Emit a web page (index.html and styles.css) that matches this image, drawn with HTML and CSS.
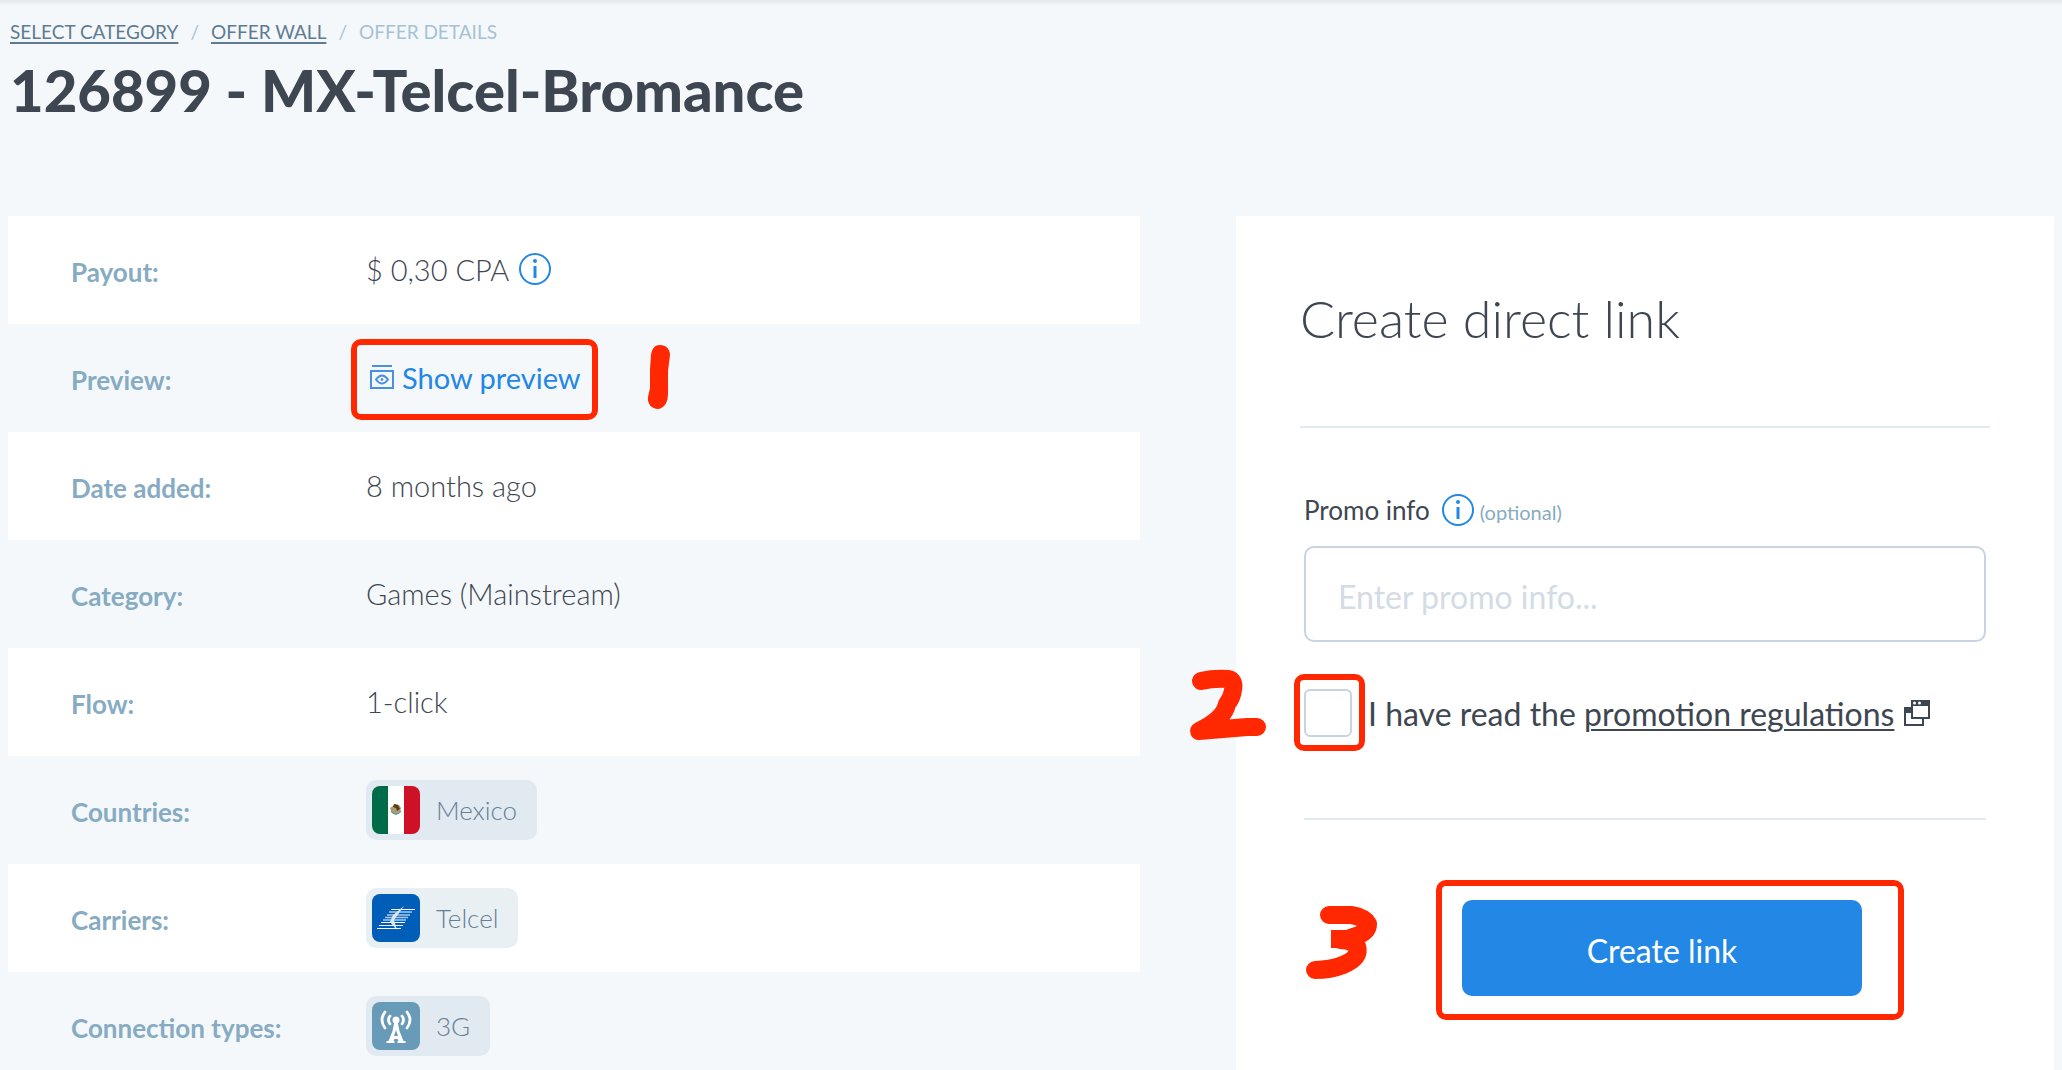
FILE: index.html
```html
<!DOCTYPE html>
<html lang="en">
<head>
<meta charset="utf-8">
<meta name="viewport" content="width=device-width, initial-scale=1">
<title>126899 - MX-Telcel-Bromance</title>
<link rel="stylesheet" href="styles.css">
</head>
<body>
<div class="page">
  <header class="page-header">
    <nav class="breadcrumbs" aria-label="Breadcrumb">
      <a href="#categories">SELECT CATEGORY</a>
      <span class="separator">/</span>
      <a href="#offers">OFFER WALL</a>
      <span class="separator">/</span>
      <span>OFFER DETAILS</span>
    </nav>
    <h1>126899 - MX-Telcel-Bromance</h1>
  </header>

  <main class="content">
    <table class="details">
      <tbody>
        <tr>
          <th scope="row">Payout:</th>
          <td><div class="value">$ 0,30 CPA
            <svg class="info" viewBox="0 0 32 32" aria-hidden="true"><circle cx="16" cy="16" r="15"/><path d="M16 13v12"/><circle class="dot" cx="16" cy="8" r="2"/></svg>
          </div></td>
        </tr>
        <tr>
          <th scope="row">Preview:</th>
          <td><div class="value marked">
            <a class="preview-link" href="#preview">
              <svg class="preview-icon" viewBox="0 0 24 24" aria-hidden="true"><path d="M2 1h20M1 6h22v17H1z"/><path class="eye" d="M6 14.500q6-8 12 0q-6 8-12 0z"/><circle class="pupil" cx="12" cy="14.500" r="1"/></svg>
              Show preview</a>
            <span class="mark mark-preview"></span>
            <svg class="digit digit-one" viewBox="0 0 22 64" aria-hidden="true"><path d="M3 10C4 3 7 0 12 0c6 0 10 4 10 10l-2 16v22c0 9-3 15-10 16C4 64-1 59 0 52l2-9V24z"/></svg>
          </div></td>
        </tr>
        <tr><th scope="row">Date added:</th><td><div class="value">8 months ago</div></td></tr>
        <tr><th scope="row">Category:</th><td><div class="value">Games (Mainstream)</div></td></tr>
        <tr><th scope="row">Flow:</th><td><div class="value">1-click</div></td></tr>
        <tr>
          <th scope="row">Countries:</th>
          <td><span class="pill">
            <svg class="pill-icon" viewBox="0 0 48 48" aria-hidden="true"><path fill="#fff" d="M0 0h48v48H0z"/><path fill="#006b49" d="M0 0h16v48H0z"/><path fill="#ce1126" d="M32 0h16v48H32z"/><path fill="#b39a6b" d="M18 22l3-2 2-2 4 1 2 3-1 4-4 3-4-2z"/><path fill="#5d3b1e" d="M22 18l4 1 2 4-3 2-1-3-3-1z"/><path fill="none" stroke="#68a0ad" stroke-width="1.500" d="M19 25q5 6 10 0"/></svg>
            Mexico</span></td>
        </tr>
        <tr>
          <th scope="row">Carriers:</th>
          <td><span class="pill pill-carrier">
            <svg class="pill-icon" viewBox="0 0 48 48" aria-hidden="true"><path fill="#005eb8" d="M0 0h48v48H0z"/><path fill="none" stroke="#fff" stroke-width="1" d="M19 15.500h24M5 34.500h24M7 31.500h24M9 28.500h24"/><path fill="none" stroke="#a9caea" stroke-width="1.500" d="M17 18h23M15 21h23M13 23.500h23M11 26h23"/><path fill="#dbe9f6" d="M32 12L22 26l3 10-7-8 3-7z"/></svg>
            Telcel</span></td>
        </tr>
        <tr>
          <th scope="row">Connection types:</th>
          <td><span class="pill">
            <svg class="pill-icon" viewBox="0 0 48 48" aria-hidden="true"><path fill="#679bb8" d="M0 0h48v48H0z"/><circle cx="24" cy="18" r="3.500" fill="#fff"/><path fill="#fff" fill-rule="evenodd" d="M22.500 19h3l2 10 4 10h2v2h-8v-2h1l-1-2h-3l-1 2h1v2h-8v-2h2l4-10zM24 28l-2 6h4z"/><path fill="none" stroke="#fff" stroke-width="2.800" stroke-linecap="round" d="M18 14q-3 4 0 8M13 10q-6 8 0 16M30 14q3 4 0 8M35 10q6 8 0 16"/></svg>
            3G</span></td>
        </tr>
      </tbody>
    </table>

    <section class="panel">
      <h2>Create direct link</h2>
      <form class="form">
        <div class="field-head">
          <label for="promo">Promo info</label>
          <svg class="info" viewBox="0 0 32 32" aria-hidden="true"><circle cx="16" cy="16" r="15"/><path d="M16 13v12"/><circle class="dot" cx="16" cy="8" r="2"/></svg>
          <span class="optional">(optional)</span>
        </div>
        <input class="promo" id="promo" type="text" placeholder="Enter promo info...">
        <div class="consent marked">
          <input id="rules" type="checkbox">
          <label for="rules">I have read the <a href="#regulations">promotion regulations</a></label>
          <svg class="window-icon" viewBox="0 0 26 26" aria-hidden="true"><path fill-rule="evenodd" d="M7 0h19v19h-6v7H0V7h7zM9 6v11h15V6zM7 13H2v11h16v-5H7z"/><circle class="hole" cx="10.500" cy="3" r="1.500"/><circle class="hole" cx="15.500" cy="3" r="1.500"/></svg>
          <span class="mark mark-consent"></span>
          <svg class="digit digit-two" viewBox="0 0 77 70" aria-hidden="true"><path d="M11 11Q24 8 38 9Q45 10 43 20Q42 28 37 34Q34 49 9 61L57 57L67 57"/></svg>
        </div>
        <div class="actions marked">
          <button type="button">Create link</button>
          <span class="mark mark-create"></span>
          <svg class="digit digit-three" viewBox="0 0 72 74" aria-hidden="true"><path d="M23 9H45Q58 11 62 18Q62 27 47 31Q40 34 34 34Q45 34 51 40Q55 52 37 59Q24 64 9 64"/><path class="nib" d="M25 24h22v18H25z"/></svg>
        </div>
      </form>
    </section>
  </main>
</div>
</body>
</html>
```
FILE: styles.css
```css
* { box-sizing: border-box; }

body {
  margin: 0;
  color: #3e4651;
  background: #f4f8fb;
  font-family: Lato, "Liberation Sans", sans-serif;
}

.page {
  height: 100vh;
  overflow: hidden;
  padding: 0 8px;
  background: linear-gradient(#e4e7ea, #f4f8fb 6px);
}

.page-header { height: 216px; padding: 20px 2px 0; }

.breadcrumbs {
  display: flex;
  gap: 12px;
  color: #a5c2d4;
  font-size: 19px;
  line-height: 24px;
}
.breadcrumbs a {
  color: #5f7b92;
  text-decoration-thickness: 2px;
  text-underline-offset: 3px;
}

h1 {
  margin: 10px 0 0;
  font-family: "Lato Black", Lato, "Liberation Sans", sans-serif;
  font-size: 58px;
  font-weight: 900;
  line-height: 72px;
}

.content {
  display: grid;
  grid-template-columns: 1132fr 818fr;
  gap: 96px;
}

.details {
  width: 100%;
  table-layout: fixed;
  border-collapse: collapse;
  align-self: start;
}
.details tr { height: 108px; }
.details tr:nth-child(odd) { background: #fff; }
.details th {
  width: 358px;
  padding: 4px 0 0 63px;
  color: #86abc2;
  font-size: 26px;
  font-weight: 700;
  text-align: left;
}
.details td { padding: 0; font-weight: 300; font-size: 29px; }
.value {
  display: flex;
  align-items: center;
  gap: 10px;
  height: 40px;
  margin-bottom: 2px;
}

.info {
  width: 32px;
  height: 32px;
  fill: none;
  stroke: #2387e5;
  stroke-width: 2;
}
.info path { stroke-width: 3; }
.info .dot { fill: #2387e5; stroke: none; }

.preview-link {
  display: flex;
  align-items: center;
  gap: 8px;
  padding-left: 4px;
  color: #2387e5;
  font-weight: 400;
  text-decoration: none;
}
.preview-icon {
  width: 24px;
  height: 24px;
  fill: none;
  stroke: #4a90e2;
  stroke-width: 2;
}
.preview-icon .pupil { fill: #4a90e2; stroke-width: 1; }

.pill {
  display: inline-flex;
  align-items: center;
  gap: 16px;
  height: 60px;
  padding: 0 20px 0 6px;
  border-radius: 10px;
  background: #e2eaf1;
  color: #667f95;
  font-size: 26px;
  vertical-align: middle;
}
.pill-carrier { background: #e8f0f4; }
.pill-icon { width: 48px; height: 48px; border-radius: 8px; }

.panel { min-height: 864px; padding: 70px 64px 0; background: #fff; }
h2 {
  height: 142px;
  margin: 0;
  border-bottom: 2px solid #e1ebf2;
  font-size: 52px;
  font-weight: 300;
  line-height: 64px;
}
.form { padding: 64px 4px 0; }
.field-head {
  display: flex;
  align-items: baseline;
  height: 54px;
  font-size: 26px;
  line-height: 36px;
}
.field-head .info { align-self: flex-start; margin: 2px 6px 0 12px; }
.optional { color: #86abc2; font-size: 20px; }

.promo {
  display: block;
  width: 100%;
  height: 96px;
  padding: 4px 32px 0;
  border: 2px solid #c8d4e1;
  border-radius: 10px;
  color: #3e4651;
  font: 400 32px Lato, "Liberation Sans", sans-serif;
}
.promo::placeholder { color: #d3dce5; opacity: 1; }

.consent {
  display: flex;
  align-items: center;
  height: 178px;
  padding-bottom: 34px;
  border-bottom: 2px solid #e1ebf2;
  font-size: 32px;
}
.consent input {
  appearance: none;
  flex: none;
  width: 48px;
  height: 48px;
  margin: 0 16px 0 0;
  border: 2px solid #c8d4e1;
  border-radius: 6px;
  background: #fff;
}
.consent a {
  color: inherit;
  text-decoration-thickness: 2px;
  text-underline-offset: 3px;
}
.window-icon { width: 26px; height: 26px; margin-left: 10px; fill: #3e4651; }
.window-icon .hole { fill: #fff; }

.actions { padding: 80px 0 0 34px; text-align: center; }
.actions button {
  width: 400px;
  height: 96px;
  padding: 4px 0 0;
  border: 0;
  border-radius: 10px;
  background: #2387e5;
  color: #fff;
  font: 400 32px Lato, "Liberation Sans", sans-serif;
}

/* Hand-drawn walkthrough marks that lie over the controls. */
.marked { position: relative; }
.mark {
  position: absolute;
  border: 6px solid #ff2800;
  border-radius: 10px;
  pointer-events: none;
}
.mark-preview { left: -15px; top: -18px; width: 247px; height: 81px; }
.mark-consent { left: -10px; top: 32px; width: 71px; height: 77px; }
.mark-create { left: calc(50% - 209px); top: 60px; width: 468px; height: 140px; }
.digit { position: absolute; overflow: visible; fill: #ff2800; }
.digit-one { left: 282px; top: -12px; width: 22px; height: 64px; }
.digit-two,
.digit-three {
  fill: none;
  stroke: #ff2800;
  stroke-width: 18;
  stroke-linecap: round;
  stroke-linejoin: round;
}
.digit .nib { fill: #ff2800; stroke: none; }
.digit-two { left: -114px; top: 28px; width: 77px; height: 70px; }
.digit-three { left: 2px; top: 86px; width: 72px; height: 74px; }
```
